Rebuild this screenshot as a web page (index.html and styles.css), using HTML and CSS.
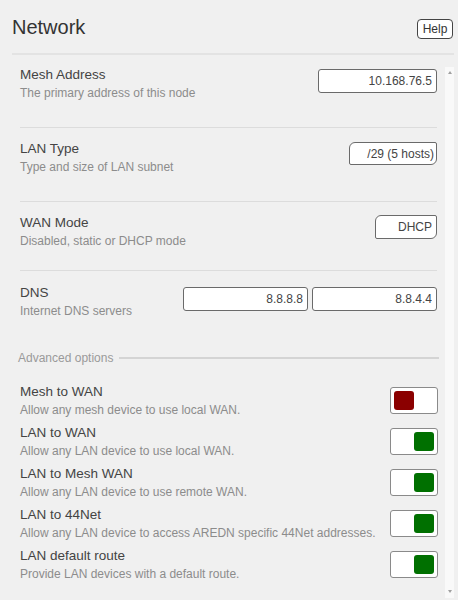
FILE: index.html
```html
<!DOCTYPE html>
<html lang="en">
<head>
<meta charset="utf-8">
<title>Network</title>
<link rel="stylesheet" href="styles.css">
</head>
<body>
<div class="dialog">
  <header class="head">
    <h1 class="title">Network</h1>
    <button class="help" type="button">Help</button>
  </header>
  <div class="body">
    <div class="content">
      <section class="row sec first">
        <div class="text">
          <div class="label">Mesh Address</div>
          <div class="desc">The primary address of this node</div>
        </div>
        <div class="ctrl"><input class="field" type="text" value="10.168.76.5"></div>
      </section>
      <section class="row sec">
        <div class="text">
          <div class="label">LAN Type</div>
          <div class="desc">Type and size of LAN subnet</div>
        </div>
        <div class="ctrl"><select class="pick lan"><option>/29 (5 hosts)</option></select></div>
      </section>
      <section class="row sec short">
        <div class="text">
          <div class="label">WAN Mode</div>
          <div class="desc">Disabled, static or DHCP mode</div>
        </div>
        <div class="ctrl"><select class="pick wan"><option>DHCP</option></select></div>
      </section>
      <section class="row sec last">
        <div class="text">
          <div class="label">DNS</div>
          <div class="desc">Internet DNS servers</div>
        </div>
        <div class="ctrl pair">
          <input class="field dns" type="text" value="8.8.8.8">
          <input class="field dns" type="text" value="8.8.4.4">
        </div>
      </section>

      <div class="adv"><span>Advanced options</span><i class="rule"></i></div>

      <div class="toggles">
        <div class="row trow">
          <div class="text">
            <div class="label">Mesh to WAN</div>
            <div class="desc">Allow any mesh device to use local WAN.</div>
          </div>
          <div class="switch off"><span class="knob"></span></div>
        </div>
        <div class="row trow">
          <div class="text">
            <div class="label">LAN to WAN</div>
            <div class="desc">Allow any LAN device to use local WAN.</div>
          </div>
          <div class="switch on"><span class="knob"></span></div>
        </div>
        <div class="row trow">
          <div class="text">
            <div class="label">LAN to Mesh WAN</div>
            <div class="desc">Allow any LAN device to use remote WAN.</div>
          </div>
          <div class="switch on"><span class="knob"></span></div>
        </div>
        <div class="row trow">
          <div class="text">
            <div class="label">LAN to 44Net</div>
            <div class="desc">Allow any LAN device to access AREDN specific 44Net addresses.</div>
          </div>
          <div class="switch on"><span class="knob"></span></div>
        </div>
        <div class="row trow">
          <div class="text">
            <div class="label">LAN default route</div>
            <div class="desc">Provide LAN devices with a default route.</div>
          </div>
          <div class="switch on"><span class="knob"></span></div>
        </div>
      </div>
    </div>
    <div class="bar" aria-hidden="true">
      <span class="arrow up"></span>
      <span class="arrow down"></span>
    </div>
  </div>
</div>
</body>
</html>
```
FILE: styles.css
```css
* { box-sizing: border-box; }
html, body {
  margin: 0;
  background: #f0f0f0;
  font-family: "Liberation Sans", Arial, sans-serif;
  color: #444;
}
.dialog {
  width: 458px;
  height: 600px;
  padding: 0 4px 0 12px;
  display: flex;
  flex-direction: column;
}
.head {
  display: flex;
  justify-content: space-between;
  align-items: flex-end;
  padding: 16px 1px 14px 0;
  border-bottom: 2px solid #e3e3e3;
}
.title {
  margin: 0;
  font-size: 20px;
  line-height: 23px;
  font-weight: normal;
  color: #333;
}
.help {
  width: 36px;
  height: 20px;
  padding: 0;
  border: 1px solid #444;
  border-radius: 4px;
  background: #fff;
  font-family: inherit;
  font-size: 12px;
  color: #333;
}
.body {
  margin-top: 12px;
  height: 531px;
  display: flex;
}
.content {
  flex: 1;
  padding: 0 8px;
  overflow: hidden;
}
.bar {
  width: 9px;
  background: #f9f9f9;
  display: flex;
  flex-direction: column;
  justify-content: space-between;
  align-items: center;
  padding: 4px 0 5px;
}
.arrow {
  width: 0;
  height: 0;
  border-left: 2.5px solid transparent;
  border-right: 2.5px solid transparent;
}
.arrow.up { border-bottom: 3px solid #a0a0a0; }
.arrow.down { border-top: 3px solid #a0a0a0; }
.row {
  display: flex;
  justify-content: space-between;
  align-items: flex-start;
}
.label {
  font-size: 13.5px;
  line-height: 16px;
  color: #444;
}
.desc {
  margin-top: 3px;
  font-size: 12px;
  line-height: 14px;
  color: #8c8c8c;
}
.sec {
  padding: 13px 0 27px;
  border-bottom: 1px solid #dcdcdc;
}
.sec.first { padding-top: 0; }
.sec.short { padding-bottom: 22px; }
.sec.last { padding-top: 14px; border-bottom: 0; padding-bottom: 0; }
.ctrl { margin-top: 2px; }
.pair { display: flex; gap: 4px; }
.field {
  width: 119px;
  height: 24px;
  border: 1px solid #6a6a6a;
  border-radius: 3px;
  background: #fff;
  padding: 0 4px;
  text-align: right;
  font-family: inherit;
  font-size: 12px;
  color: #444;
}
.field.dns { width: 125px; }
.pick {
  appearance: none;
  -webkit-appearance: none;
  height: 23px;
  border: 1px solid #6a6a6a;
  border-radius: 6px 2px 6px 2px;
  background: #fff;
  padding: 0 2px 0 0;
  text-align-last: right;
  font-family: inherit;
  font-size: 12px;
  color: #444;
}
.pick.lan { width: 88px; margin-top: -1px; }
.pick.wan { width: 62px; height: 24px; padding-right: 4px; margin-top: -2px; }
.adv {
  margin-top: 33px;
  margin-left: -2px;
  display: flex;
  align-items: center;
  gap: 6px;
  font-size: 12px;
  line-height: 14px;
  color: #9a9a9a;
}
.adv .rule {
  flex: 1;
  height: 2px;
  background: #d4d4d4;
  margin-right: -2px;
}
.toggles {
  margin-top: 19px;
  display: flex;
  flex-direction: column;
  gap: 8px;
}
.trow { align-items: center; }
.switch {
  width: 48px;
  height: 27px;
  border: 1px solid #8a8a8a;
  border-radius: 3px;
  background: #fff;
  padding: 3px;
  display: flex;
  margin-right: -1px;
}
.knob {
  width: 20px;
  height: 19px;
  border-radius: 3px;
}
.switch.off .knob { background: #8b0000; }
.switch.on { justify-content: flex-end; }
.switch.on .knob { background: #007000; }
```
